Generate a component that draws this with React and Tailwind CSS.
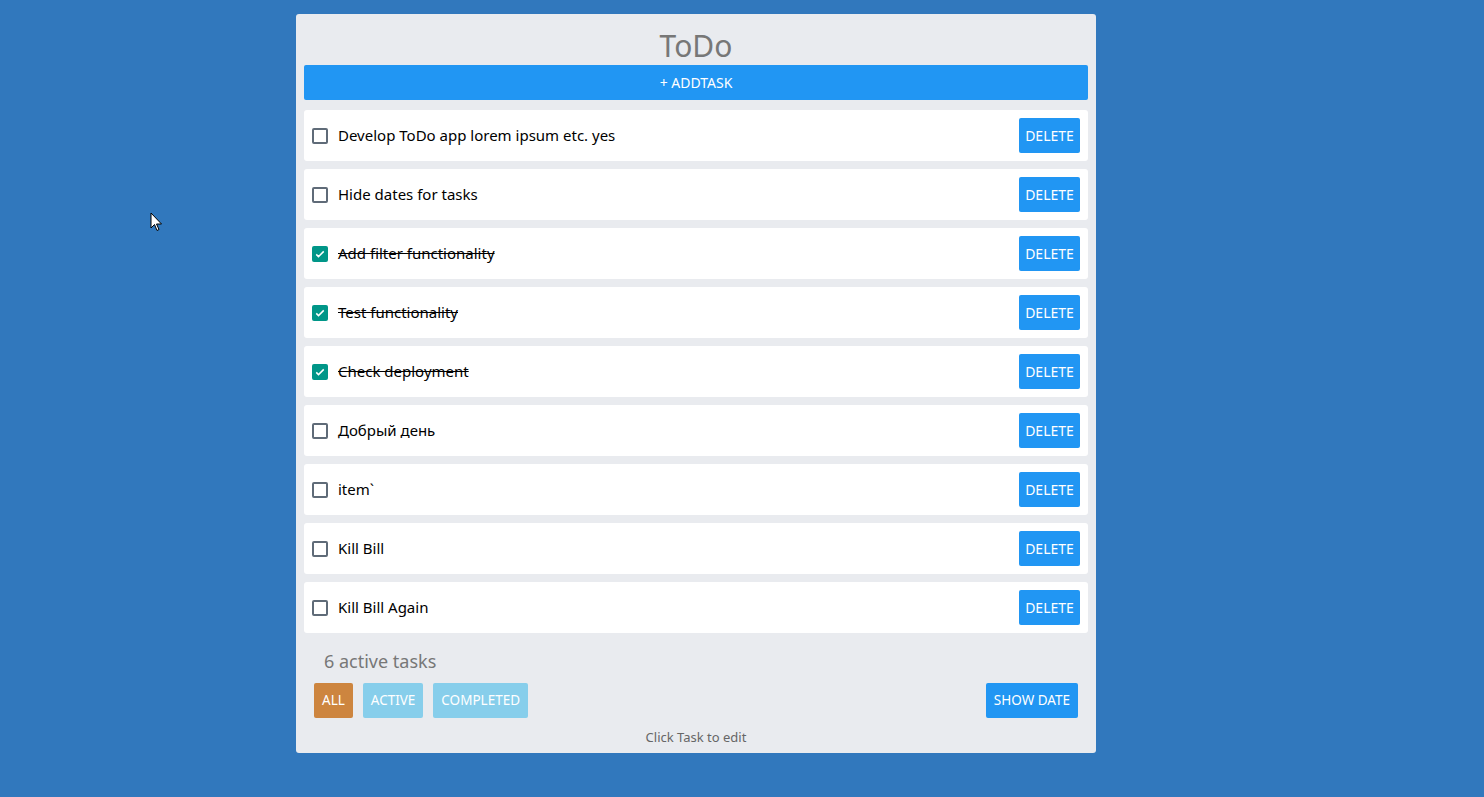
import { useState } from "react";

const initialTasks = [
  { id: 1, title: "Develop ToDo app lorem ipsum etc. yes", completed: false },
  { id: 2, title: "Hide dates for tasks", completed: false },
  { id: 3, title: "Add filter functionality", completed: true },
  { id: 4, title: "Test functionality", completed: true },
  { id: 5, title: "Check deployment", completed: true },
  { id: 6, title: "Добрый день", completed: false },
  { id: 7, title: "item`", completed: false },
  { id: 8, title: "Kill Bill", completed: false },
  { id: 9, title: "Kill Bill Again", completed: false },
];

function Checkbox({ checked, onChange }) {
  return (
    <button
      onClick={onChange}
      className={`w-4 h-4 rounded-[2px] flex items-center justify-center shrink-0 ${
        checked ? "bg-[#009688]" : "border-2 border-[#5f6b78] bg-white"
      }`}
    >
      {checked && (
        <svg viewBox="0 0 16 16" className="w-3 h-3">
          <path d="M3 8.5l3 3 7-7" fill="none" stroke="white" strokeWidth="2" />
        </svg>
      )}
    </button>
  );
}

export default function App() {
  const [tasks, setTasks] = useState(initialTasks);
  const [filter, setFilter] = useState("all");

  const active = tasks.filter((t) => !t.completed).length;
  const shown = tasks.filter((t) =>
    filter === "all" ? true : filter === "active" ? !t.completed : t.completed
  );

  const filterBtn = (name) =>
    `h-[35px] px-2 rounded-[2px] text-white text-[13.5px] ${
      filter === name ? "bg-[#cd853f]" : "bg-[#87ceeb]"
    }`;

  return (
    <div
      className="min-h-[797px] bg-[#3178bd] pt-[14px] relative"
      style={{ fontFamily: '"Noto Sans", "Open Sans", sans-serif' }}
    >
      <div className="w-[800px] ml-[296px] bg-[#e9ebef] rounded-[3px] px-2 pb-[5px]">
        <h1 className="text-[30px] leading-[30px] pt-[17px] pb-[4px] text-center text-[#777]">
          ToDo
        </h1>
        <button className="w-full h-[35px] bg-[#2196f3] text-white text-sm rounded-[2px]">
          + ADDTASK
        </button>

        <ul className="mt-[10px] flex flex-col gap-2">
          {shown.map((task) => (
            <li
              key={task.id}
              className="h-[51px] bg-white rounded-[3px] flex items-center pl-2 pr-2"
            >
              <Checkbox
                checked={task.completed}
                onChange={() =>
                  setTasks(
                    tasks.map((t) =>
                      t.id === task.id ? { ...t, completed: !t.completed } : t
                    )
                  )
                }
              />
              <span
                className={`flex-1 ml-[10px] text-[15px] text-black ${
                  task.completed ? "line-through" : ""
                }`}
              >
                {task.title}
              </span>
              <button
                onClick={() => setTasks(tasks.filter((t) => t.id !== task.id))}
                className="h-[35px] w-[61px] bg-[#2196f3] text-white text-sm rounded-[2px]"
              >
                DELETE
              </button>
            </li>
          ))}
        </ul>

        <p className="mt-[16px] ml-[20px] text-lg text-[#777] leading-6">
          {active} active tasks
        </p>

        <div className="mt-[10px] flex items-center px-[10px]">
          <div className="flex gap-[10px]">
            <button onClick={() => setFilter("all")} className={filterBtn("all")}>
              ALL
            </button>
            <button onClick={() => setFilter("active")} className={filterBtn("active")}>
              ACTIVE
            </button>
            <button
              onClick={() => setFilter("completed")}
              className={filterBtn("completed")}
            >
              COMPLETED
            </button>
          </div>
          <button className="ml-auto h-[35px] px-2 bg-[#2196f3] text-white text-[13.5px] rounded-[2px]">
            SHOW DATE
          </button>
        </div>

        <p className="mt-[10px] text-center text-[13px] text-[#666]">
          Click Task to edit
        </p>
      </div>

      <svg
        className="absolute left-[150px] top-[212px]"
        width="13"
        height="21"
        viewBox="0 0 13 21"
      >
        <path
          d="M1 1v15l3.5-3.5 2.5 6 2-1-2.5-5.5h5z"
          fill="white"
          stroke="black"
          strokeWidth="1"
        />
      </svg>
    </div>
  );
}
